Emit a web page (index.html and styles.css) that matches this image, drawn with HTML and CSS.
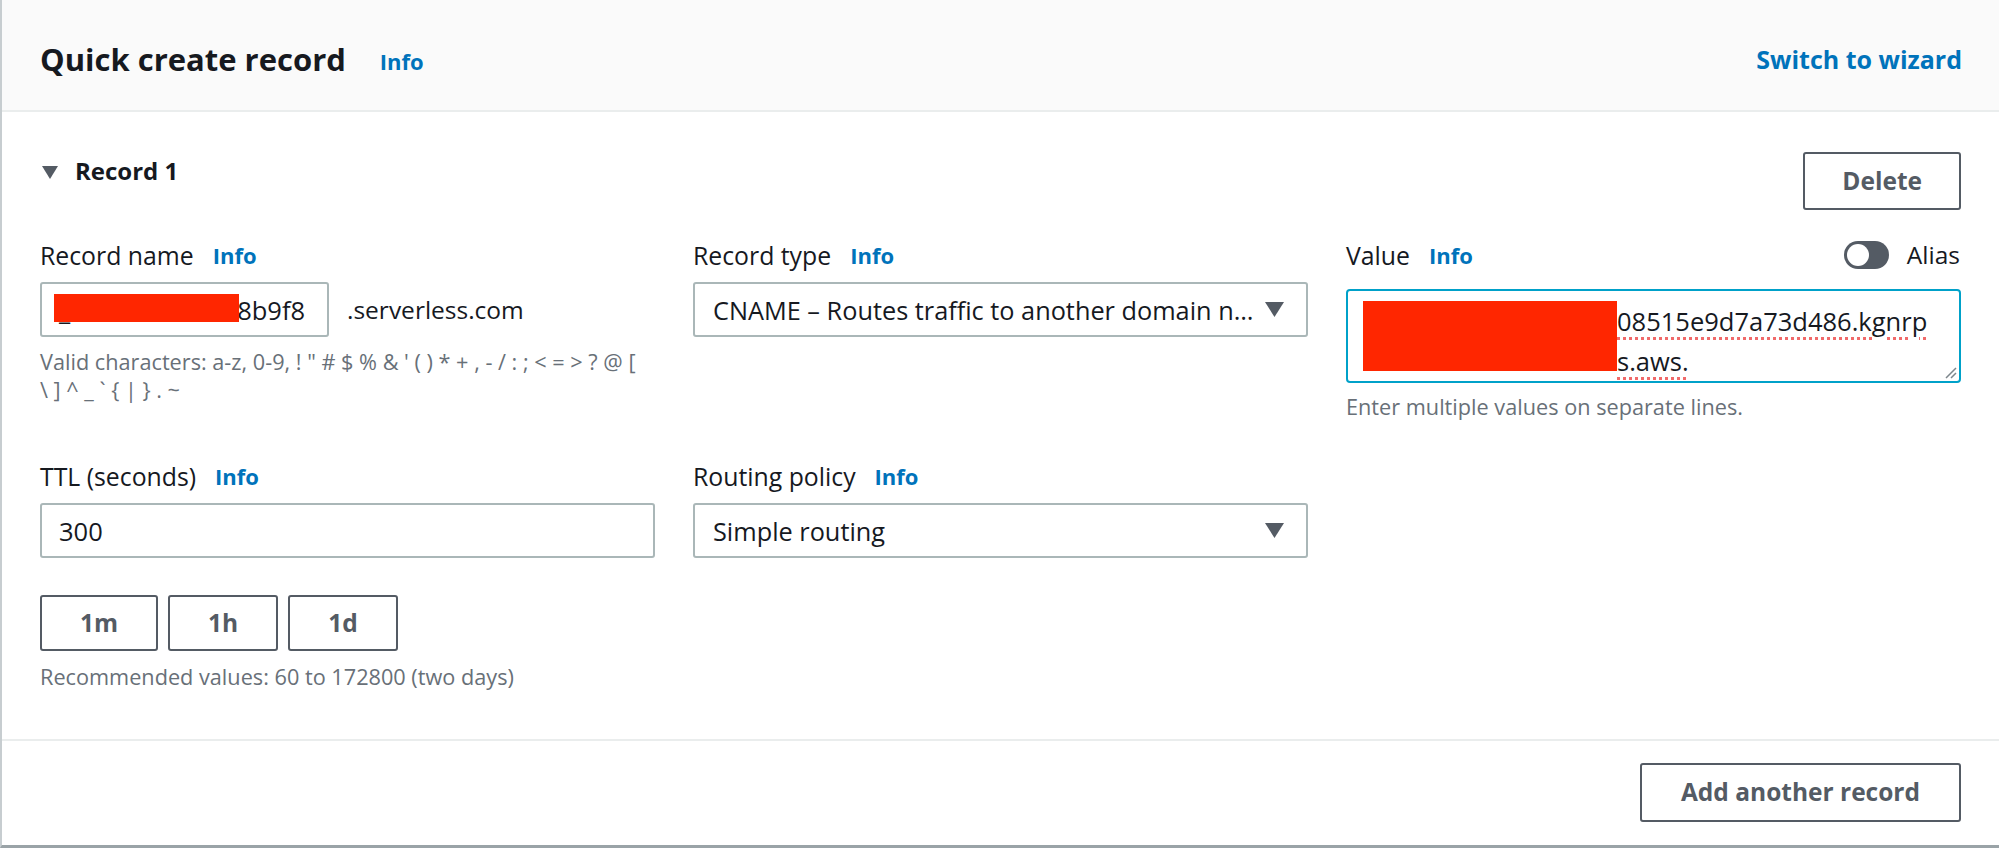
FILE: index.html
```html
<!DOCTYPE html>
<html lang="en">
<head>
<meta charset="utf-8">
<title>Quick create record</title>
<link rel="stylesheet" href="styles.css">
</head>
<body>
<div class="panel">
  <div class="panel-header">
    <div class="title-group">
      <h2 class="title">Quick create record</h2>
      <a class="info info-title">Info</a>
    </div>
    <a class="header-link">Switch to wizard</a>
  </div>

  <div class="panel-body">
    <div class="record-head">
      <div class="record-toggle">
        <span class="caret"></span>
        <h3 class="record-title">Record 1</h3>
      </div>
      <button class="btn">Delete</button>
    </div>

    <div class="fields">
      <div class="field">
        <div class="label-row"><span class="label">Record name</span><a class="info">Info</a></div>
        <div class="name-row">
          <div class="input input-name">
            <span class="under">_</span><span class="gap-name"></span>8b9f8
            <span class="mask mask-name"></span>
          </div>
          <span class="suffix">.serverless.com</span>
        </div>
        <div class="hint hint-chars">
          <span class="hint-line">Valid characters: a-z, 0-9, ! " # $ % &amp; ' ( ) * + , - / : ; &lt; = &gt; ? @ [</span>
          <span class="hint-line">\ ] ^ _ ` { | } . ~</span>
        </div>
      </div>

      <div class="field">
        <div class="label-row"><span class="label">Record type</span><a class="info">Info</a></div>
        <div class="select">
          <span class="select-text">CNAME – Routes traffic to another domain n…</span>
          <svg class="select-caret" width="19" height="15" viewBox="0 0 19 15"><path d="M0 0 H19 L9.5 15 Z" fill="#545b64"/></svg>
        </div>
      </div>

      <div class="field">
        <div class="label-row label-row-value">
          <div class="label-group"><span class="label">Value</span><a class="info">Info</a></div>
          <div class="alias">
            <span class="toggle"><span class="knob"></span></span>
            <span class="alias-text">Alias</span>
          </div>
        </div>
        <div class="textarea">
          <div class="ta-line"><span class="gap-value"></span><span class="spell">08515e9d7a73d486.kgnrp</span></div>
          <div class="ta-line"><span class="gap-value"></span><span class="spell">s.aws.</span></div>
          <span class="mask mask-value"></span>
          <svg class="grip" width="14" height="14" viewBox="0 0 14 14"><path d="M13 3 L3 13 M13 8 L8 13" stroke="#7d868c" stroke-width="1.5" fill="none"/></svg>
        </div>
        <div class="hint hint-value">Enter multiple values on separate lines.</div>
      </div>

      <div class="field">
        <div class="label-row"><span class="label">TTL (seconds)</span><a class="info">Info</a></div>
        <div class="input input-ttl">300</div>
        <div class="ttl-buttons">
          <button class="btn btn-ttl">1m</button>
          <button class="btn btn-ttl">1h</button>
          <button class="btn btn-ttl">1d</button>
        </div>
        <div class="hint hint-ttl">Recommended values: 60 to 172800 (two days)</div>
      </div>

      <div class="field">
        <div class="label-row"><span class="label">Routing policy</span><a class="info">Info</a></div>
        <div class="select">
          <span class="select-text">Simple routing</span>
          <svg class="select-caret" width="19" height="15" viewBox="0 0 19 15"><path d="M0 0 H19 L9.5 15 Z" fill="#545b64"/></svg>
        </div>
      </div>

      <div class="field"></div>
    </div>
  </div>

  <div class="panel-footer">
    <button class="btn btn-add">Add another record</button>
  </div>
</div>
</body>
</html>
```

FILE: styles.css
```css
* { box-sizing: border-box; }

html, body {
  margin: 0;
  padding: 0;
  background: #ffffff;
}

body {
  font-family: "Open Sans", "Noto Sans", sans-serif;
  font-size: 24.5px;
  line-height: 38px;
  color: #16191f;
  width: 1999px;
  height: 848px;
  overflow: hidden;
}

.panel {
  border-left: 2px solid #c7cdd0;
  border-bottom: 3px solid #9aa3a7;
  height: 848px;
  display: flex;
  flex-direction: column;
}

.panel-header {
  height: 112px;
  background: #fafafa;
  border-bottom: 2px solid #eaeded;
  padding: 8px 37px 0 38px;
  display: flex;
  align-items: center;
  justify-content: space-between;
}

.title-group {
  display: flex;
  align-items: center;
}

.title {
  margin: 0;
  font-size: 31px;
  font-weight: 700;
  line-height: 40px;
  color: #16191f;
}

.info {
  color: #0073bb;
  font-weight: 700;
  font-size: 22px;
  line-height: 38px;
  margin-left: 19px;
}

.info-title {
  margin-left: 34px;
  margin-top: 4px;
}

.header-link {
  color: #0073bb;
  font-weight: 700;
  font-size: 25px;
}

.panel-body {
  padding: 40px 38px 48px 38px;
}

.record-head {
  display: flex;
  justify-content: space-between;
  align-items: flex-start;
}

.record-toggle {
  display: flex;
  align-items: center;
  height: 38px;
}

.caret {
  width: 0;
  height: 0;
  border-left: 8px solid transparent;
  border-right: 8px solid transparent;
  border-top: 13px solid #545b64;
  margin-left: 2px;
  margin-right: 17px;
  margin-top: 2px;
}

.record-title {
  margin: 0;
  font-size: 24px;
  font-weight: 700;
  line-height: 38px;
}

.btn {
  font-family: inherit;
  font-size: 24.5px;
  font-weight: 700;
  color: #545b64;
  background: #ffffff;
  border: 2px solid #545b64;
  border-radius: 3px;
  height: 58px;
  padding: 0 37px;
  line-height: 1;
}

.fields {
  margin-top: 26px;
  display: grid;
  grid-template-columns: repeat(3, 1fr);
  column-gap: 38px;
  row-gap: 36px;
}

.label-row {
  display: flex;
  align-items: center;
  height: 38px;
}

.label {
  font-size: 24.8px;
}

.label-row-value {
  justify-content: space-between;
}

.label-group {
  display: flex;
  align-items: center;
}

.alias {
  display: flex;
  align-items: center;
  margin-right: 1px;
}

.toggle {
  width: 45px;
  height: 28px;
  border-radius: 14px;
  background: #545b64;
  position: relative;
  display: inline-block;
  margin-right: 18px;
}

.knob {
  position: absolute;
  left: 3px;
  top: 3px;
  width: 22px;
  height: 22px;
  border-radius: 50%;
  background: #ffffff;
}

.name-row {
  display: flex;
  align-items: center;
  margin-top: 8px;
}

.input {
  height: 55px;
  border: 2px solid #aab7b8;
  border-radius: 3px;
  padding: 0 17px;
  display: flex;
  align-items: center;
  font-size: 25.5px;
  position: relative;
  white-space: nowrap;
}

.input-name {
  width: 289px;
}

.under {
  display: inline-block;
}

.gap-name {
  display: inline-block;
  width: 167px;
}

.mask {
  position: absolute;
  background: #ff2600;
}

.mask-name {
  left: 12px;
  top: 10px;
  width: 185px;
  height: 28px;
}

.suffix {
  margin-left: 18px;
}

.hint {
  color: #687078;
  font-size: 21.7px;
  line-height: 28px;
}

.hint-chars {
  margin-top: 11px;
}

.hint-line {
  display: block;
  white-space: nowrap;
}

.select {
  margin-top: 8px;
  height: 55px;
  border: 2px solid #aab7b8;
  border-radius: 3px;
  padding: 0 22px 0 18px;
  display: flex;
  align-items: center;
  justify-content: space-between;
  font-size: 25.3px;
  white-space: nowrap;
}

.select-caret {
  flex: none;
}

.textarea {
  margin-top: 15px;
  height: 94px;
  border: 2px solid #00a1c9;
  border-radius: 4px;
  padding: 10px 19px 0 19px;
  position: relative;
  font-size: 25.5px;
  line-height: 40px;
  white-space: nowrap;
}

.ta-line {
  height: 40px;
}

.gap-value {
  display: inline-block;
  width: 250px;
}

.spell {
  text-decoration: underline dotted #f06a6a;
  text-decoration-thickness: 3px;
  text-underline-offset: 6px;
}

.mask-value {
  left: 15px;
  top: 10px;
  width: 254px;
  height: 70px;
}

.grip {
  position: absolute;
  right: 2px;
  bottom: 2px;
}

.hint-value {
  margin-top: 10px;
}

.input-ttl {
  margin-top: 8px;
}

.ttl-buttons {
  display: flex;
  gap: 10px;
  margin-top: 37px;
}

.btn-ttl {
  height: 56px;
  padding: 0 38px;
}

.hint-ttl {
  margin-top: 12px;
}

.panel-footer {
  border-top: 2px solid #eaeded;
  padding: 22px 38px 0 38px;
  display: flex;
  justify-content: flex-end;
  flex: 1;
}

.btn-add {
  height: 59px;
  padding: 0 39px;
}
```
